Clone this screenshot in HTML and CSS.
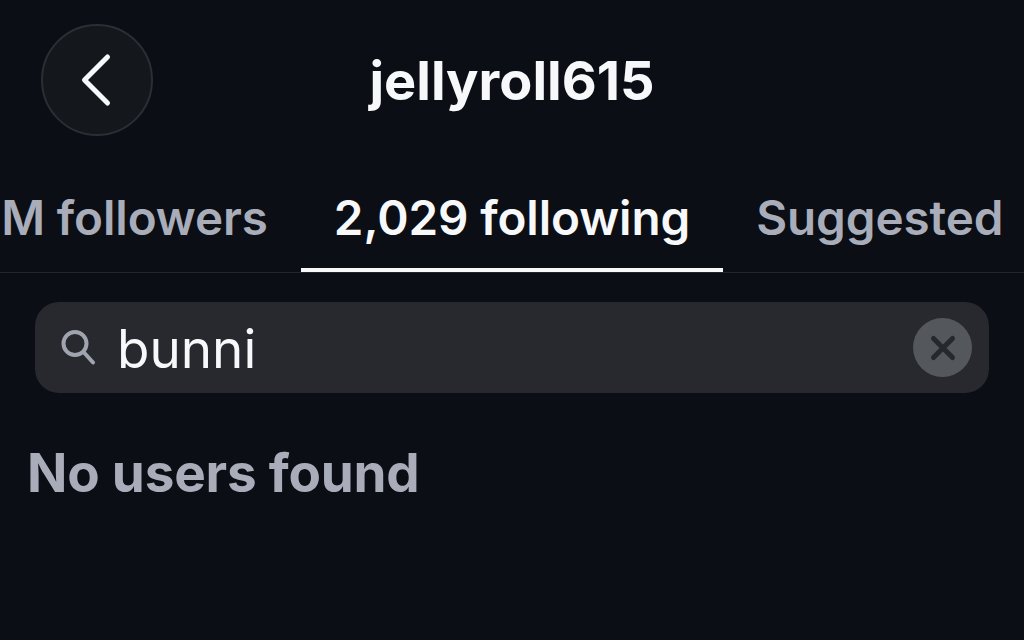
FILE: index.html
```html
<!DOCTYPE html>
<html lang="en">

<head>
  <meta charset="UTF-8">
  <meta name="viewport" content="width=device-width, initial-scale=1.0">
  <title>jellyroll615</title>
  <link rel="stylesheet" href="styles.css">
</head>

<body>
  <header class="header">
    <button class="back" type="button" aria-label="Back">
      <svg width="40" height="60" viewBox="0 0 40 60">
        <path d="M30.5 7 L7.5 30 L30.5 53" />
      </svg>
    </button>
    <h1 class="title">jellyroll615</h1>
  </header>

  <nav class="tabs">
    <div class="tab tab-left">M followers</div>
    <div class="tab tab-active">2,029 following</div>
    <div class="tab tab-right">Suggested</div>
  </nav>

  <form class="search">
    <svg class="search-icon" width="36" height="38" viewBox="0 0 36 38">
      <circle cx="14" cy="14.5" r="11.5" />
      <path d="M23 23.5 L32 33.5" />
    </svg>
    <span class="search-text">bunni</span>
    <button class="clear" type="button" aria-label="Clear">
      <svg width="28" height="28" viewBox="0 0 28 28">
        <path d="M4.5 4.5 L23.5 23.5 M23.5 4.5 L4.5 23.5" />
      </svg>
    </button>
  </form>

  <p class="empty">No users found</p>
</body>

</html>
```

FILE: styles.css
```css
html,
body {
  height: 100%;
}

body {
  margin: 0;
  background-color: #0b0e14;
  color: #f7f8fa;
  font-family: Inter, "Liberation Sans", sans-serif;
  overflow: hidden;
}

.header {
  display: flex;
  align-items: center;
  justify-content: center;
  position: relative;
  height: 160px;
}

.back {
  position: absolute;
  left: 41px;
  top: 24px;
  display: flex;
  align-items: center;
  justify-content: center;
  width: 112px;
  height: 112px;
  padding: 0;
  background-color: #14171c;
  border: 2px solid #2b2e33;
  border-radius: 50%;
}

.back svg path {
  fill: none;
  stroke: #f7f8fa;
  stroke-width: 5;
  stroke-linecap: round;
  stroke-linejoin: round;
}

.title {
  margin: 0;
  font-size: 54px;
  font-weight: 700;
}

.tabs {
  display: grid;
  grid-template-columns: minmax(0, 1fr) auto minmax(0, 1fr);
  height: 113px;
  border-bottom: 1px solid #23262b;
  box-sizing: border-box;
  font-size: 47.6px;
  font-weight: 600;
  letter-spacing: -0.1px;
  white-space: nowrap;
  overflow: hidden;
}

.tab {
  display: flex;
  height: 113px;
  box-sizing: border-box;
  padding: 29px 33px 0;
  color: #a8adb9;
}

.tab-left {
  justify-content: flex-end;
}

.tab-active {
  height: 112px;
  color: #f7f8fa;
  border-bottom: 4px solid #f7f8fa;
}

.search {
  display: flex;
  align-items: center;
  height: 91px;
  margin: 29px 35px 0;
  padding: 0 17px 0 26px;
  background-color: #27292e;
  border-radius: 24px;
}

.search-icon circle,
.search-icon path {
  fill: none;
  stroke: #a0a4ae;
  stroke-width: 4;
  stroke-linecap: round;
}

.search-text {
  flex: 1;
  margin: 2px 0 0 20px;
  font-size: 53px;
}

.clear {
  display: flex;
  align-items: center;
  justify-content: center;
  width: 59px;
  height: 59px;
  padding: 0;
  background-color: #54575b;
  border: none;
  border-radius: 50%;
}

.clear svg path {
  fill: none;
  stroke: #25282d;
  stroke-width: 5;
  stroke-linecap: round;
}

.empty {
  margin: 48px 0 0 27px;
  color: #a8adb9;
  font-size: 53px;
  font-weight: 700;
  letter-spacing: -0.2px;
}
```
